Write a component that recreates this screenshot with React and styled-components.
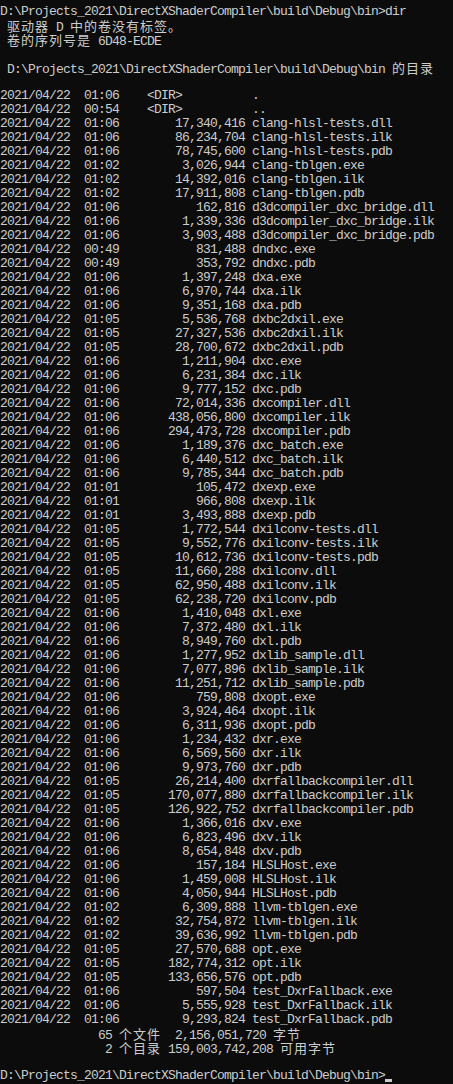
import React from "react";
import styled, { createGlobalStyle } from "styled-components";

const Global = createGlobalStyle`
  html, body {
    margin: 0;
    padding: 0;
    background: #0c0c0c;
  }
`;

const Console = styled.div`
  background: #0c0c0c;
  color: #cccccc;
  min-height: 1084px;
  box-sizing: border-box;
  padding: 5px 0 0 0;
  font-family: "Liberation Mono", "DejaVu Sans Mono", monospace;
  font-size: 13px;
  letter-spacing: -0.8px;
  overflow: hidden;
`;

const Line = styled.div`
  height: 14px;
  line-height: 14px;
  white-space: pre;
`;

const Wide = styled.span`
  display: inline-block;
  height: 14px;
  font-family: "Noto Sans CJK SC", sans-serif;
  font-size: 13px;
  letter-spacing: 1px;
  line-height: 14px;
`;

const Cursor = styled.span`
  display: inline-block;
  width: 7px;
  height: 3px;
  background: #cccccc;
  vertical-align: -3px;
`;

const DIR = "D:\\Projects_2021\\DirectXShaderCompiler\\build\\Debug\\bin";

// [time, size, name]
const files = [
  ["01:06", "17,340,416", "clang-hlsl-tests.dll"],
  ["01:06", "86,234,704", "clang-hlsl-tests.ilk"],
  ["01:06", "78,745,600", "clang-hlsl-tests.pdb"],
  ["01:02", "3,026,944", "clang-tblgen.exe"],
  ["01:02", "14,392,016", "clang-tblgen.ilk"],
  ["01:02", "17,911,808", "clang-tblgen.pdb"],
  ["01:06", "162,816", "d3dcompiler_dxc_bridge.dll"],
  ["01:06", "1,339,336", "d3dcompiler_dxc_bridge.ilk"],
  ["01:06", "3,903,488", "d3dcompiler_dxc_bridge.pdb"],
  ["00:49", "831,488", "dndxc.exe"],
  ["00:49", "353,792", "dndxc.pdb"],
  ["01:06", "1,397,248", "dxa.exe"],
  ["01:06", "6,970,744", "dxa.ilk"],
  ["01:06", "9,351,168", "dxa.pdb"],
  ["01:05", "5,536,768", "dxbc2dxil.exe"],
  ["01:05", "27,327,536", "dxbc2dxil.ilk"],
  ["01:05", "28,700,672", "dxbc2dxil.pdb"],
  ["01:06", "1,211,904", "dxc.exe"],
  ["01:06", "6,231,384", "dxc.ilk"],
  ["01:06", "9,777,152", "dxc.pdb"],
  ["01:06", "72,014,336", "dxcompiler.dll"],
  ["01:06", "438,056,800", "dxcompiler.ilk"],
  ["01:06", "294,473,728", "dxcompiler.pdb"],
  ["01:06", "1,189,376", "dxc_batch.exe"],
  ["01:06", "6,440,512", "dxc_batch.ilk"],
  ["01:06", "9,785,344", "dxc_batch.pdb"],
  ["01:01", "105,472", "dxexp.exe"],
  ["01:01", "966,808", "dxexp.ilk"],
  ["01:01", "3,493,888", "dxexp.pdb"],
  ["01:05", "1,772,544", "dxilconv-tests.dll"],
  ["01:05", "9,552,776", "dxilconv-tests.ilk"],
  ["01:05", "10,612,736", "dxilconv-tests.pdb"],
  ["01:05", "11,660,288", "dxilconv.dll"],
  ["01:05", "62,950,488", "dxilconv.ilk"],
  ["01:05", "62,238,720", "dxilconv.pdb"],
  ["01:06", "1,410,048", "dxl.exe"],
  ["01:06", "7,372,480", "dxl.ilk"],
  ["01:06", "8,949,760", "dxl.pdb"],
  ["01:06", "1,277,952", "dxlib_sample.dll"],
  ["01:06", "7,077,896", "dxlib_sample.ilk"],
  ["01:06", "11,251,712", "dxlib_sample.pdb"],
  ["01:06", "759,808", "dxopt.exe"],
  ["01:06", "3,924,464", "dxopt.ilk"],
  ["01:06", "6,311,936", "dxopt.pdb"],
  ["01:06", "1,234,432", "dxr.exe"],
  ["01:06", "6,569,560", "dxr.ilk"],
  ["01:06", "9,973,760", "dxr.pdb"],
  ["01:05", "26,214,400", "dxrfallbackcompiler.dll"],
  ["01:05", "170,077,880", "dxrfallbackcompiler.ilk"],
  ["01:05", "126,922,752", "dxrfallbackcompiler.pdb"],
  ["01:06", "1,366,016", "dxv.exe"],
  ["01:06", "6,823,496", "dxv.ilk"],
  ["01:06", "8,654,848", "dxv.pdb"],
  ["01:06", "157,184", "HLSLHost.exe"],
  ["01:06", "1,459,008", "HLSLHost.ilk"],
  ["01:06", "4,050,944", "HLSLHost.pdb"],
  ["01:02", "6,309,888", "llvm-tblgen.exe"],
  ["01:02", "32,754,872", "llvm-tblgen.ilk"],
  ["01:02", "39,636,992", "llvm-tblgen.pdb"],
  ["01:05", "27,570,688", "opt.exe"],
  ["01:05", "182,774,312", "opt.ilk"],
  ["01:05", "133,656,576", "opt.pdb"],
  ["01:06", "597,504", "test_DxrFallback.exe"],
  ["01:06", "5,555,928", "test_DxrFallback.ilk"],
  ["01:06", "9,293,824", "test_DxrFallback.pdb"],
];

const lines = [
  DIR + ">dir",
  " 驱动器 D 中的卷没有标签。",
  " 卷的序列号是 6D48-ECDE",
  "",
  " " + DIR + " 的目录",
  "",
  "2021/04/22  01:06    <DIR>          .",
  "2021/04/22  00:54    <DIR>          ..",
  ...files.map(([t, s, n]) => "2021/04/22  " + t + s.padStart(18) + " " + n),
  "              65 个文件  2,156,051,720 字节",
  "               2 个目录 159,003,742,208 可用字节",
  "",
];

// CJK runs get full-width (two-cell) spans
const renderText = (text) =>
  text.split(/([\u3000-\u9fff\uff00-\uffef]+)/).map((part, i) =>
    /[\u3000-\u9fff\uff00-\uffef]/.test(part) ? <Wide key={i}>{part}</Wide> : part
  );

export default function App() {
  return (
    <Console>
      <Global />
      {lines.map((l, i) => (
        <Line key={i}>{l === "" ? " " : renderText(l)}</Line>
      ))}
      <Line>
        {DIR + ">"}
        <Cursor />
      </Line>
    </Console>
  );
}
